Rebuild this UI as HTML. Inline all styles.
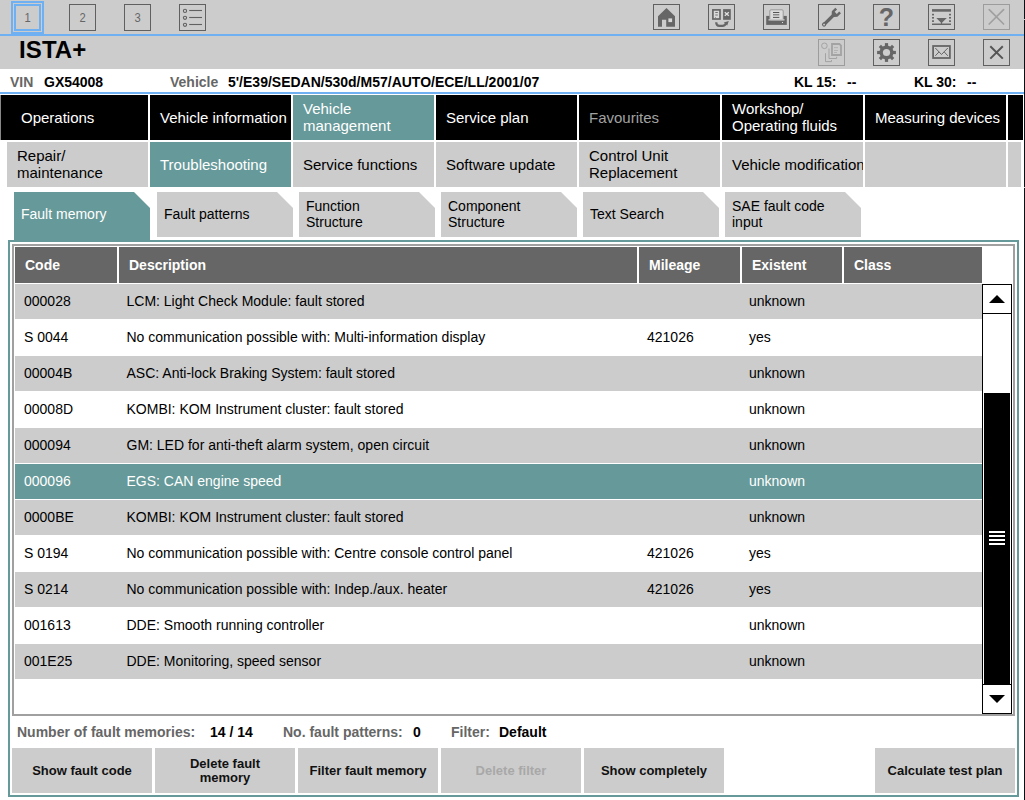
<!DOCTYPE html>
<html><head><meta charset="utf-8">
<style>
*{margin:0;padding:0;box-sizing:border-box}
html,body{width:1025px;height:800px;overflow:hidden;background:#fff;font-family:"Liberation Sans",sans-serif;position:relative}
.a{position:absolute}
.gray{background:#cccccc}
.blk{background:#000}
.teal{background:#669999!important}
.t{position:absolute;white-space:nowrap}
.nav{position:absolute;top:95px;height:45px;width:141px;color:#fff;font-size:15px;line-height:17px;display:flex;align-items:center;padding-left:10px}
.sub{white-space:nowrap;overflow:hidden;position:absolute;top:142px;height:45px;width:141px;color:#000;font-size:15px;line-height:17px;display:flex;align-items:center;padding-left:10px;background:#cccccc}
.tab{position:absolute;top:192px;height:45px;width:136px;color:#000;font-size:14px;line-height:16px;display:flex;align-items:center;padding-left:7px;padding-bottom:2px;background:#cccccc;clip-path:polygon(0 0,120px 0,136px 16px,136px 100%,0 100%)}
.ib{position:absolute;top:4px;width:27px;height:26px;border:1px solid #606060}
.ib2{position:absolute;top:39px;width:27px;height:27px;border:1px solid #606060}
.hd{position:absolute;top:247px;height:36px;background:#666;color:#fff;font-weight:bold;font-size:14px;line-height:36px;padding-left:10px}
.row{position:absolute;left:15px;width:967px;height:35px;font-size:14px;color:#000;line-height:35px}
.row span{position:absolute;top:0}
.btn{position:absolute;top:748px;height:45px;width:140px;background:#cccccc;font-weight:bold;font-size:13px;line-height:14px;display:flex;align-items:center;justify-content:center;text-align:center;color:#111}
</style></head><body>
<!-- top bars -->
<div class="a gray" style="left:0;top:0;width:1025px;height:69px"></div>
<div class="a" style="left:0;top:34px;width:1024px;height:2px;background:#6eb0f2"></div>
<div class="a" style="left:1024px;top:0;width:1px;height:800px;background:#0c1014"></div>
<div class="a" style="left:1024px;top:19px;width:1px;height:1px;background:#c8c8c8"></div>
<div class="a" style="left:1024px;top:187px;width:1px;height:1px;background:#d8d8d8"></div>

<!-- box 1 selected -->
<div class="a" style="left:11px;top:1px;width:33px;height:33px;border:2px solid #6eb0f2"></div>
<div class="a" style="left:14px;top:4px;width:27px;height:27px;border:2px solid #6eb0f2"></div>
<div class="t" style="left:14px;top:4px;width:27px;height:27px;line-height:27px;text-align:center;font-size:13px;color:#666;transform:scaleX(0.86)">1</div>
<div class="ib" style="left:69px;height:27px"></div>
<div class="t" style="left:69px;top:4px;width:27px;height:27px;line-height:27px;text-align:center;font-size:13px;color:#666;transform:scaleX(0.86)">2</div>
<div class="ib" style="left:124px;height:27px"></div>
<div class="t" style="left:124px;top:4px;width:27px;height:27px;line-height:27px;text-align:center;font-size:13px;color:#666;transform:scaleX(0.86)">3</div>
<div class="ib" style="left:179px;height:27px"></div>
<svg class="a" style="left:179px;top:4px" width="27" height="27" viewBox="0 0 27 27">
<g fill="none" stroke="#606060" stroke-width="1.1"><circle cx="6" cy="6.9" r="1.6"/><circle cx="6" cy="13.8" r="1.6"/><circle cx="6" cy="20.8" r="1.6"/></g>
<g stroke="#606060" stroke-width="1.1"><line x1="10.2" y1="6.5" x2="23" y2="6.5"/><line x1="10.2" y1="13.5" x2="23" y2="13.5"/><line x1="10.2" y1="20.5" x2="23" y2="20.5"/></g>
</svg>

<!-- right icons row 1 -->
<div class="ib" style="left:653px"></div>
<div class="ib" style="left:708px"></div>
<div class="ib" style="left:763px"></div>
<div class="ib" style="left:818px"></div>
<div class="ib" style="left:873px"></div>
<div class="ib" style="left:928px"></div>
<div class="ib" style="left:983px;border-color:#9c9c9c"></div>

<svg class="a" style="left:0;top:0" width="1025" height="69" viewBox="0 0 1025 69">
<!-- home -->
<path d="M658,16.3 L666.5,7.9 L675,16.3 L675,26.8 L666.2,26.8 L666.2,19.8 L662,19.8 L662,26.8 L658,26.8 Z" fill="#666"/>
<rect x="668.4" y="18.4" width="3.7" height="3.7" fill="#d8d8d8"/>
<!-- swap -->
<rect x="712.9" y="9.9" width="7.1" height="9.1" fill="#d8d8d8" stroke="#666" stroke-width="1.7"/>
<rect x="715.3" y="12" width="2.5" height="0.9" fill="#666"/>
<rect x="715.3" y="14.2" width="2.5" height="1.6" fill="#9a9a9a"/>
<rect x="715.2" y="17.2" width="0.8" height="0.8" fill="#777"/>
<rect x="723.1" y="9.1" width="7.7" height="10.7" fill="#666"/>
<path d="M724.8,12.3 L728.8,15.8 M728.8,12.3 L724.8,15.8" stroke="#e0e0e0" stroke-width="1.4"/>
<path d="M716.2,22.2 Q716.2,25.8 719.5,25.8 L722.5,25.8 Q725.2,25.8 726,23.2" fill="none" stroke="#666" stroke-width="2.2"/>
<path d="M723.8,22.4 L728.8,21 L727.2,25.6 Z" fill="#666"/>
<!-- printer -->
<rect x="766.2" y="15.9" width="20.6" height="9" fill="#666"/>
<rect x="769.8" y="9.8" width="13.4" height="10" rx="1.2" fill="#dcdcdc" stroke="#999" stroke-width="1"/>
<rect x="768.5" y="19.2" width="16" height="1.3" fill="#d0d0d0"/>
<rect x="773" y="12" width="6.3" height="1" fill="#555"/>
<rect x="773" y="14" width="6.3" height="1.5" fill="#888"/>
<rect x="773" y="16.9" width="6.3" height="1" fill="#555"/>
<rect x="782" y="22" width="1" height="1" fill="#ddd"/>
<!-- wrench -->
<g transform="translate(835.6 13) rotate(45)" fill="#666">
<path d="M-4,-3.6 L-1.5,-3.6 L-1.5,-0.2 L1.5,-0.2 L1.5,-3.6 L4,-3.6 L4,1.4 L1.7,3.8 L-1.7,3.8 L-4,1.4 Z"/>
<rect x="-1.7" y="3" width="3.4" height="13.5"/>
<circle cx="0" cy="16.3" r="2.1"/>
<circle cx="0" cy="16.3" r="0.9" fill="#d4d4d4"/>
</g>
<!-- question -->
<text x="886.5" y="26" text-anchor="middle" font-family="Liberation Sans" font-weight="bold" font-size="25" fill="#666">?</text>
<!-- list triangle -->
<rect x="932" y="9.1" width="19" height="2.6" fill="#666"/>
<g fill="#666"><rect x="932" y="13.8" width="2" height="1.6"/><rect x="932" y="17" width="2" height="1.6"/><rect x="932" y="20.3" width="2" height="1.6"/>
<rect x="949" y="13.8" width="2" height="1.6"/><rect x="949" y="17" width="2" height="1.6"/><rect x="949" y="20.3" width="2" height="1.6"/></g>
<path d="M936.3,18 L946.8,18 L942.2,22.5 L941.9,24 L941.1,24 L940.8,22.5 Z" fill="#666"/>
<rect x="932" y="23.5" width="19" height="1.5" fill="#666"/>
<!-- disabled X -->
<path d="M989.2,9.7 L1003.6,24 M1003.6,9.7 L989.2,24" stroke="#a0a0a0" stroke-width="1.7" stroke-linecap="round"/>
<!-- copy disabled -->
<g fill="none" stroke="#a3a3a3">
<path d="M832,44 L839.5,44 L841,45.5 L841,55 L832,55 Z" stroke-width="1.8"/>
<circle cx="824.4" cy="45.8" r="2.8" stroke-width="1"/>
<path d="M829,48.5 L829,58.5 L836.6,58.5 L836.6,56.8" stroke-width="1"/>
<path d="M825.5,53.2 L825.5,61.6 L831.5,61.6 L831.5,60" stroke-width="1"/>
</g>
<g fill="#b0b0b0"><rect x="834" y="47.2" width="4" height="0.9"/><rect x="834" y="50" width="4" height="0.9"/><rect x="834" y="52" width="3" height="0.9"/></g>
<!-- gear -->
<g fill="#666"><rect x="884.90" y="43.10" width="3.2" height="3.40" transform="rotate(0 886.5 52.5)"/><rect x="884.90" y="43.10" width="3.2" height="3.40" transform="rotate(45 886.5 52.5)"/><rect x="884.90" y="43.10" width="3.2" height="3.40" transform="rotate(90 886.5 52.5)"/><rect x="884.90" y="43.10" width="3.2" height="3.40" transform="rotate(135 886.5 52.5)"/><rect x="884.90" y="43.10" width="3.2" height="3.40" transform="rotate(180 886.5 52.5)"/><rect x="884.90" y="43.10" width="3.2" height="3.40" transform="rotate(225 886.5 52.5)"/><rect x="884.90" y="43.10" width="3.2" height="3.40" transform="rotate(270 886.5 52.5)"/><rect x="884.90" y="43.10" width="3.2" height="3.40" transform="rotate(315 886.5 52.5)"/><circle cx="886.5" cy="52.5" r="7.0"/></g><circle cx="886.5" cy="52.5" r="3.6" fill="#cdcdcd"/>
<!-- envelope -->
<rect x="933.1" y="46" width="16.8" height="12" fill="none" stroke="#666" stroke-width="1.8"/>
<path d="M935.3,48 L941.5,54.5 L947.8,48 M935.3,55.8 L939,51.9 M947.8,55.8 L944.2,51.9" fill="none" stroke="#666" stroke-width="1"/>
<!-- X -->
<path d="M990.3,46.2 L1002.8,58.6 M1002.8,46.2 L990.3,58.6" stroke="#555" stroke-width="2"/>
</svg>
<!-- title row -->
<div class="t" style="left:19px;top:35px;font-size:24px;font-weight:bold;line-height:30px;letter-spacing:0.1px;color:#000">ISTA+</div>
<div class="ib2" style="left:818px;border-color:#9c9c9c"></div>
<div class="ib2" style="left:873px"></div>
<div class="ib2" style="left:928px"></div>
<div class="ib2" style="left:983px"></div>

<!-- VIN row -->
<div class="t" style="left:10px;top:73px;font-size:14px;font-weight:bold;line-height:18px;color:#666">VIN</div>
<div class="t" style="left:44px;top:73px;font-size:14px;font-weight:bold;line-height:18px;color:#000">GX54008</div>
<div class="t" style="left:170px;top:73px;font-size:14px;font-weight:bold;line-height:18px;color:#666">Vehicle</div>
<div class="t" style="left:228px;top:73px;font-size:14px;font-weight:bold;line-height:18px;color:#000">5'/E39/SEDAN/530d/M57/AUTO/ECE/LL/2001/07</div>
<div class="t" style="left:794px;top:73px;font-size:14px;font-weight:bold;line-height:18px;color:#000">KL 15:</div>
<div class="t" style="left:847px;top:73px;font-size:14px;font-weight:bold;line-height:18px;color:#000">--</div>
<div class="t" style="left:914px;top:73px;font-size:14px;font-weight:bold;line-height:18px;color:#000">KL 30:</div>
<div class="t" style="left:967px;top:73px;font-size:14px;font-weight:bold;line-height:18px;color:#000">--</div>
<div class="a" style="left:0;top:92px;width:1024px;height:2px;background:#6eb0f2"></div>

<!-- main nav -->
<div class="a" style="left:0;top:95px;width:1px;height:45px;background:#888"></div>
<div class="nav blk" style="left:1px;width:147px;padding-left:20px">Operations</div>
<div class="nav blk" style="left:150px">Vehicle information</div>
<div class="nav teal" style="left:293px;padding-bottom:2px">Vehicle<br>management</div>
<div class="nav blk" style="left:436px">Service plan</div>
<div class="nav blk" style="left:579px;color:#a2a2a2">Favourites</div>
<div class="nav blk" style="left:722px;padding-bottom:2px">Workshop/<br>Operating fluids</div>
<div class="nav blk" style="left:865px">Measuring devices</div>
<div class="nav blk" style="left:1008px;width:15px"></div>

<!-- sub nav -->
<div class="sub" style="left:7px;padding-bottom:2px">Repair/<br>maintenance</div>
<div class="sub teal" style="left:150px;color:#fff">Troubleshooting</div>
<div class="sub" style="left:293px">Service functions</div>
<div class="sub" style="left:436px">Software update</div>
<div class="sub" style="left:579px;padding-bottom:2px">Control Unit<br>Replacement</div>
<div class="sub" style="left:722px">Vehicle modification</div>
<div class="sub" style="left:865px"></div>
<div class="sub" style="left:1008px;width:13px"></div>

<!-- tabs -->
<div class="a teal" style="left:14px;top:236px;width:136px;height:5px"></div>
<div class="tab teal" style="left:14px;color:#fff">Fault memory</div>
<div class="tab" style="left:157px">Fault patterns</div>
<div class="tab" style="left:299px">Function<br>Structure</div>
<div class="tab" style="left:441px">Component<br>Structure</div>
<div class="tab" style="left:583px">Text Search</div>
<div class="tab" style="left:725px">SAE fault code<br>input</div>

<!-- panel -->
<div class="a" style="left:8px;top:240px;width:1011px;height:557px;border:2px solid #669999"></div>
<div class="a" style="left:12px;top:244px;width:1003px;height:472px;border:2px solid #a0a0a0"></div>

<!-- header -->
<div class="hd" style="left:15px;width:102px">Code</div>
<div class="hd" style="left:119px;width:518px">Description</div>
<div class="hd" style="left:639px;width:101px">Mileage</div>
<div class="hd" style="left:742px;width:100px">Existent</div>
<div class="hd" style="left:844px;width:138px">Class</div>

<!-- rows -->
<div class="row" style="top:284px;background:#cccccc"><span style="left:9px">000028</span><span style="left:111.5px">LCM: Light Check Module: fault stored</span><span style="left:632px"></span><span style="left:734px">unknown</span></div>
<div class="row" style="top:320px;"><span style="left:9px">S 0044</span><span style="left:111.5px">No communication possible with: Multi-information display</span><span style="left:632px">421026</span><span style="left:734px">yes</span></div>
<div class="row" style="top:356px;background:#cccccc"><span style="left:9px">00004B</span><span style="left:111.5px">ASC: Anti-lock Braking System: fault stored</span><span style="left:632px"></span><span style="left:734px">unknown</span></div>
<div class="row" style="top:392px;"><span style="left:9px">00008D</span><span style="left:111.5px">KOMBI: KOM Instrument cluster: fault stored</span><span style="left:632px"></span><span style="left:734px">unknown</span></div>
<div class="row" style="top:428px;background:#cccccc"><span style="left:9px">000094</span><span style="left:111.5px">GM: LED for anti-theft alarm system, open circuit</span><span style="left:632px"></span><span style="left:734px">unknown</span></div>
<div class="row" style="top:464px;background:#669999;color:#fff"><span style="left:9px">000096</span><span style="left:111.5px">EGS: CAN engine speed</span><span style="left:632px"></span><span style="left:734px">unknown</span></div>
<div class="row" style="top:500px;background:#cccccc"><span style="left:9px">0000BE</span><span style="left:111.5px">KOMBI: KOM Instrument cluster: fault stored</span><span style="left:632px"></span><span style="left:734px">unknown</span></div>
<div class="row" style="top:536px;"><span style="left:9px">S 0194</span><span style="left:111.5px">No communication possible with: Centre console control panel</span><span style="left:632px">421026</span><span style="left:734px">yes</span></div>
<div class="row" style="top:572px;background:#cccccc"><span style="left:9px">S 0214</span><span style="left:111.5px">No communication possible with: Indep./aux. heater</span><span style="left:632px">421026</span><span style="left:734px">yes</span></div>
<div class="row" style="top:608px;"><span style="left:9px">001613</span><span style="left:111.5px">DDE: Smooth running controller</span><span style="left:632px"></span><span style="left:734px">unknown</span></div>
<div class="row" style="top:644px;background:#cccccc"><span style="left:9px">001E25</span><span style="left:111.5px">DDE: Monitoring, speed sensor</span><span style="left:632px"></span><span style="left:734px">unknown</span></div>

<!-- scrollbar -->
<div class="a" style="left:982px;top:284px;width:30px;height:430px;border:1px solid #000;background:#fff"></div>
<div class="a" style="left:982px;top:313px;width:30px;height:1px;background:#000"></div>
<div class="a" style="left:984px;top:393px;width:26px;height:292px;background:#000"></div>
<div class="a" style="left:982px;top:684px;width:30px;height:1px;background:#000"></div>
<div class="a" style="left:989px;top:531px;width:16px;height:2px;background:#fff"></div>
<div class="a" style="left:989px;top:535px;width:16px;height:2px;background:#fff"></div>
<div class="a" style="left:989px;top:539px;width:16px;height:2px;background:#fff"></div>
<div class="a" style="left:989px;top:543px;width:16px;height:2px;background:#fff"></div>
<svg class="a" style="left:982px;top:284px" width="30" height="430" viewBox="0 0 30 430">
<path d="M7,19 L23,19 L15,11 Z" fill="#000"/>
<path d="M7,411 L23,411 L15,419 Z" fill="#000"/>
</svg>
<!-- status -->
<div class="t" style="left:17px;top:723px;font-size:14px;font-weight:bold;line-height:18px;color:#666">Number of fault memories:</div>
<div class="t" style="left:210px;top:723px;font-size:14px;font-weight:bold;line-height:18px;color:#000">14 / 14</div>
<div class="t" style="left:283px;top:723px;font-size:14px;font-weight:bold;line-height:18px;color:#666">No. fault patterns:</div>
<div class="t" style="left:413px;top:723px;font-size:14px;font-weight:bold;line-height:18px;color:#000">0</div>
<div class="t" style="left:451px;top:723px;font-size:14px;font-weight:bold;line-height:18px;color:#666">Filter:</div>
<div class="t" style="left:499px;top:723px;font-size:14px;font-weight:bold;line-height:18px;color:#000">Default</div>

<!-- buttons -->
<div class="btn" style="left:12px">Show fault code</div>
<div class="btn" style="left:155px">Delete fault<br>memory</div>
<div class="btn" style="left:298px">Filter fault memory</div>
<div class="btn" style="left:441px;color:#a8a8a8">Delete filter</div>
<div class="btn" style="left:584px">Show completely</div>
<div class="btn" style="left:875px">Calculate test plan</div>
</body></html>
